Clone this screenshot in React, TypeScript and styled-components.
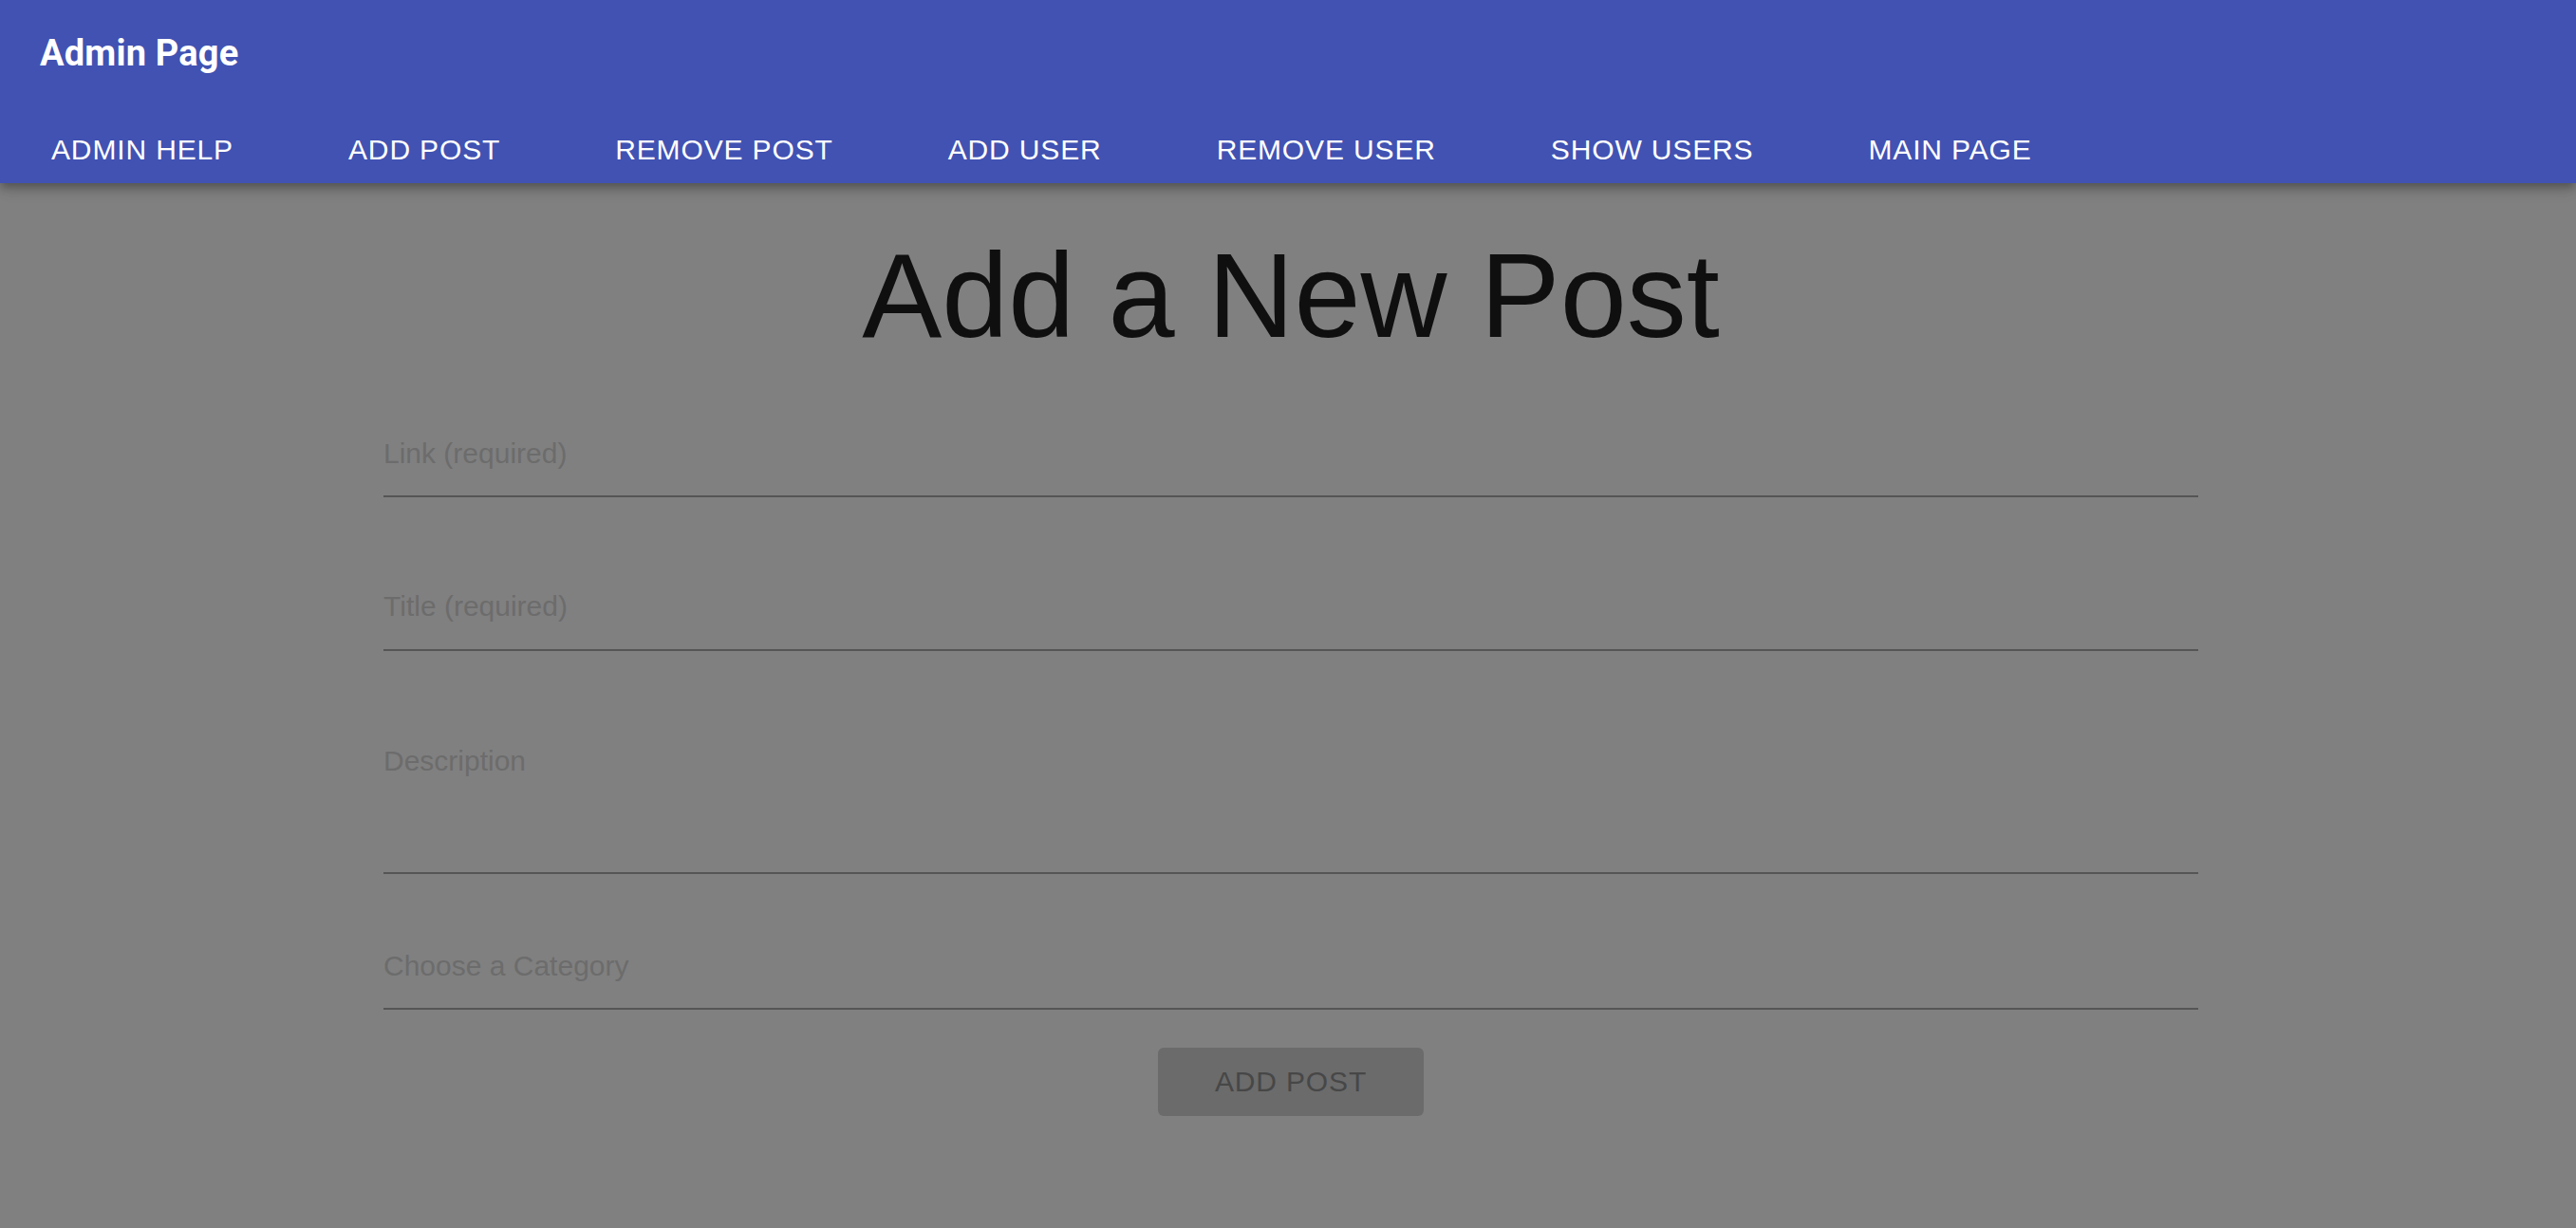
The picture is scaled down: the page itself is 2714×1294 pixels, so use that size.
import styled, { createGlobalStyle } from "styled-components";

const GlobalStyle = createGlobalStyle`
  html, body {
    margin: 0;
    padding: 0;
    background-color: #808080;
  }
  * {
    box-sizing: border-box;
  }
`;

const Wrapper = styled.div`
  min-height: 100vh;
  background-color: #808080;
  font-family: "Liberation Sans", Arial, sans-serif;
`;

const AppBar = styled.header`
  position: relative;
  z-index: 2;
  background-color: #4152b2;
  color: white;
  padding: 34px 0 17px 42px;
  box-shadow: 0 4px 8px -2px rgba(0, 0, 0, 0.2), 0 8px 10px 0 rgba(0, 0, 0, 0.14),
    0 2px 20px 0 rgba(0, 0, 0, 0.12);
`;

const Brand = styled.h6`
  margin: 0;
  font-family: Roboto, "Liberation Sans", sans-serif;
  font-weight: 700;
  font-size: 38px;
  line-height: 44px;
  letter-spacing: 0.2px;
`;

const Nav = styled.nav`
  display: flex;
  gap: 121px;
  margin: 62px 0 0 12px;
`;

const NavItem = styled.a`
  font-size: 30px;
  line-height: 36px;
  letter-spacing: 0.86px;
  text-transform: uppercase;
  color: white;
  text-decoration: none;
  white-space: nowrap;
  cursor: pointer;
`;

const Main = styled.main`
  display: flex;
  flex-direction: column;
  align-items: center;
  padding: 56px 0 80px 6px;
`;

const Heading = styled.h1`
  margin: 0 0 86px;
  font-size: 126px;
  font-weight: 400;
  line-height: 126px;
  color: #0f0f0f;
`;

const Form = styled.form`
  width: 1912px;
  display: flex;
  flex-direction: column;
`;

const Field = styled.div<{ gapTop: number; space: number }>`
  margin-top: ${(p) => p.gapTop}px;
  padding-bottom: ${(p) => p.space}px;
  border-bottom: 2px solid #555555;
`;

const Label = styled.label`
  display: block;
  font-size: 30px;
  line-height: 34px;
  color: #6c6c6c;
`;

const Submit = styled.button`
  align-self: center;
  margin-top: 40px;
  width: 280px;
  height: 72px;
  border: none;
  border-radius: 6px;
  background-color: #6b6b6b;
  color: #474747;
  font-family: "Liberation Sans", Arial, sans-serif;
  font-size: 30px;
  letter-spacing: 0.86px;
  text-transform: uppercase;
  display: flex;
  align-items: center;
  justify-content: center;
`;

const links = [
  "Admin Help",
  "Add Post",
  "Remove Post",
  "Add User",
  "Remove User",
  "Show Users",
  "Main Page",
];

const fields = [
  { label: "Link (required)", gapTop: 0, space: 27 },
  { label: "Title (required)", gapTop: 98, space: 28 },
  { label: "Description", gapTop: 99, space: 100 },
  { label: "Choose a Category", gapTop: 80, space: 27 },
];

function App() {
  return (
    <Wrapper>
      <GlobalStyle />
      <AppBar>
        <Brand>Admin Page</Brand>
        <Nav>
          {links.map((l) => (
            <NavItem key={l}>{l}</NavItem>
          ))}
        </Nav>
      </AppBar>
      <Main>
        <Heading>Add a New Post</Heading>
        <Form onSubmit={(e) => e.preventDefault()}>
          {fields.map((f) => (
            <Field key={f.label} gapTop={f.gapTop} space={f.space}>
              <Label>{f.label}</Label>
            </Field>
          ))}
          <Submit type="submit" disabled>
            Add Post
          </Submit>
        </Form>
      </Main>
    </Wrapper>
  );
}

export default App;
